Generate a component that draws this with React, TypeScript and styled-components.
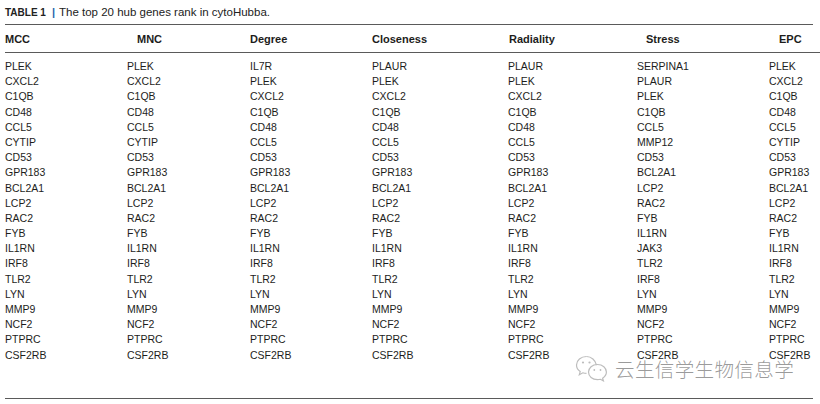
import React from 'react';
import styled, { createGlobalStyle } from 'styled-components';

const GlobalStyle = createGlobalStyle`
  html, body {
    margin: 0;
    padding: 0;
    background: #fff;
  }
  body {
    font-family: "Liberation Sans", Arial, sans-serif;
    color: #1d1d1b;
  }
`;

const Page = styled.div`
  position: relative;
  width: 820px;
  height: 404px;
  padding-left: 5px;
  box-sizing: border-box;
  overflow: hidden;
`;

const Caption = styled.div`
  height: 24px;
  display: flex;
  align-items: center;
  white-space: nowrap;
  font-size: 11.5px;
  color: #222;
`;

const CaptionLabel = styled.span`
  font-weight: bold;
  font-size: 10px;
`;

const CaptionBar = styled.span`
  color: #2a64ad;
  font-weight: bold;
  font-size: 11px;
  margin: 0 4px 0 6px;
`;

const Table = styled.div`
  display: grid;
  grid-template-columns: 122px 123px 122px 136px 129px 132px 1fr;
  width: 808px;
  border-top: 1px solid #5a5a5a;
  border-bottom: 1px solid #5a5a5a;
  padding-bottom: 35px;
`;

const HeadCell = styled.div<{ $offset: number; $last?: boolean }>`
  height: 27px;
  display: flex;
  align-items: center;
  padding-left: ${p => p.$offset}px;
  font-weight: bold;
  font-size: 11px;
  color: #1d1d1b;
  border-bottom: 1px solid #5a5a5a;
  margin-right: ${p => (p.$last ? '-12px' : '0')};
`;

const HeadGap = styled.div`
  grid-column: 1 / -1;
  height: 6px;
`;

const Cell = styled.div`
  font-size: 10.5px;
  line-height: 15.2px;
  height: 15.2px;
  white-space: nowrap;
  color: #1d1d1b;
`;

const Watermark = styled.div`
  position: absolute;
  left: 575px;
  top: 354px;
  display: flex;
  align-items: center;
  gap: 7px;
  pointer-events: none;
`;

const WatermarkText = styled.span`
  font-family: "Noto Sans CJK SC", sans-serif;
  font-weight: 300;
  font-size: 19.6px;
  letter-spacing: 0.3px;
  color: rgba(110, 110, 110, 0.7);
`;

const base = [
  'PLEK', 'CXCL2', 'C1QB', 'CD48', 'CCL5', 'CYTIP', 'CD53', 'GPR183', 'BCL2A1', 'LCP2',
  'RAC2', 'FYB', 'IL1RN', 'IRF8', 'TLR2', 'LYN', 'MMP9', 'NCF2', 'PTPRC', 'CSF2RB',
];
const degree = [
  'IL7R', 'PLEK', 'CXCL2', 'C1QB', 'CD48', 'CCL5', 'CD53', 'GPR183', 'BCL2A1', 'LCP2',
  'RAC2', 'FYB', 'IL1RN', 'IRF8', 'TLR2', 'LYN', 'MMP9', 'NCF2', 'PTPRC', 'CSF2RB',
];
const closeness = [
  'PLAUR', 'PLEK', 'CXCL2', 'C1QB', 'CD48', 'CCL5', 'CD53', 'GPR183', 'BCL2A1', 'LCP2',
  'RAC2', 'FYB', 'IL1RN', 'IRF8', 'TLR2', 'LYN', 'MMP9', 'NCF2', 'PTPRC', 'CSF2RB',
];
const stress = [
  'SERPINA1', 'PLAUR', 'PLEK', 'C1QB', 'CCL5', 'MMP12', 'CD53', 'BCL2A1', 'LCP2', 'RAC2',
  'FYB', 'IL1RN', 'JAK3', 'TLR2', 'IRF8', 'LYN', 'MMP9', 'NCF2', 'PTPRC', 'CSF2RB',
];

const columns = [
  { name: 'MCC', offset: 0, genes: base },
  { name: 'MNC', offset: 10, genes: base },
  { name: 'Degree', offset: 0, genes: degree },
  { name: 'Closeness', offset: 0, genes: closeness },
  { name: 'Radiality', offset: 1, genes: closeness },
  { name: 'Stress', offset: 9, genes: stress },
  { name: 'EPC', offset: 10, genes: base },
];

const WeChatIcon = () => (
  <svg width="33" height="27" viewBox="0 0 33 27" fill="none" stroke="#bdbdbd" strokeWidth="1.2">
    <path d="M11.5 1.5C5.9 1.5 1.5 5.3 1.5 10c0 2.7 1.4 5 3.7 6.6l-0.9 3.1 3.5-1.9c1.2 0.4 2.4 0.6 3.7 0.6" />
    <path d="M21.5 10.2c-0.9-4.9-5.3-8.7-10-8.7" />
    <circle cx="8" cy="7.5" r="1.1" fill="#bdbdbd" stroke="none" />
    <circle cx="14.5" cy="7.5" r="1.1" fill="#bdbdbd" stroke="none" />
    <path d="M22.5 9.5c-5.2 0-9 3.4-9 7.6s3.8 7.6 9 7.6c1 0 2-0.1 2.9-0.4l3 1.6-0.8-2.7c2.3-1.4 3.8-3.6 3.8-6.1 0-4.2-3.8-7.6-8.9-7.6z" />
    <circle cx="19.3" cy="15" r="0.9" fill="#bdbdbd" stroke="none" />
    <circle cx="25.5" cy="15" r="0.9" fill="#bdbdbd" stroke="none" />
  </svg>
);

export default function App() {
  return (
    <>
      <GlobalStyle />
      <Page>
        <Caption>
          <CaptionLabel>TABLE 1</CaptionLabel>
          <CaptionBar>|</CaptionBar>
          The top 20 hub genes rank in cytoHubba.
        </Caption>
        <Table>
          {columns.map((c, i) => (
            <HeadCell key={c.name} $offset={c.offset} $last={i === columns.length - 1}>
              {c.name}
            </HeadCell>
          ))}
          <HeadGap />
          {base.map((_, row) =>
            columns.map(c => <Cell key={c.name + row}>{c.genes[row]}</Cell>)
          )}
        </Table>
        <Watermark>
          <WeChatIcon />
          <WatermarkText>云生信学生物信息学</WatermarkText>
        </Watermark>
      </Page>
    </>
  );
}
